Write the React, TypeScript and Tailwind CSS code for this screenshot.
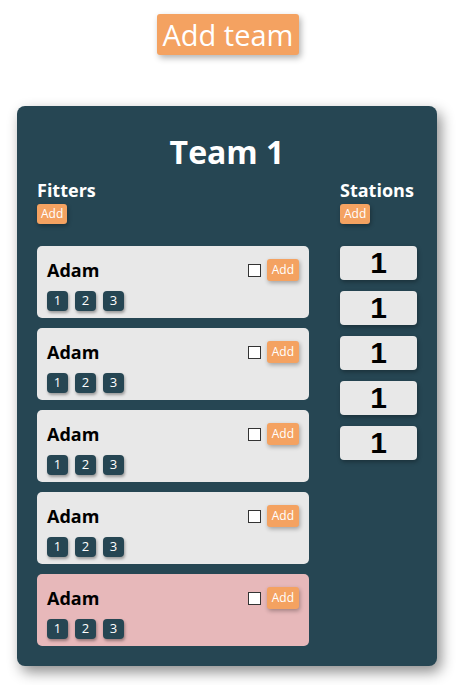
import React from "react";

const font = { fontFamily: '"Open Sans", "Noto Sans", sans-serif' };

function FitterCard({ pink }: { pink?: boolean }) {
  return (
    <div
      className={`w-[272px] h-[72px] rounded-[5px] px-[10px] pt-[11px] ${
        pink ? "bg-[#e7b8ba]" : "bg-[#e8e8e8]"
      }`}
    >
      <div className="flex items-center justify-between h-[26px]">
        <span className="text-[18px] font-bold text-black leading-none">Adam</span>
        <div className="flex items-center gap-[6px]">
          <span className="w-[13px] h-[13px] border border-[#333] bg-white" />
          <button className="h-[22px] px-[5px] bg-[#f4a261] text-white text-[12px] rounded-[3px] shadow-[1px_2px_4px_rgba(0,0,0,0.3)] leading-none">
            Add
          </button>
        </div>
      </div>
      <div className="flex gap-[7px] mt-[8px]">
        {["1", "2", "3"].map((n) => (
          <span
            key={n}
            className="w-[21px] h-[20px] rounded-[4px] bg-[#264653] text-white text-[13px] flex items-center justify-center shadow-[1px_2px_3px_rgba(0,0,0,0.35)]"
          >
            {n}
          </span>
        ))}
      </div>
    </div>
  );
}

function Station() {
  return (
    <div className="w-[77px] h-[34px] rounded-[4px] bg-[#e8e8e8] flex items-center justify-center shadow-[1px_2px_4px_rgba(0,0,0,0.3)]">
      <span
        className="text-[30px] font-bold text-black leading-none"
        style={{ fontFamily: '"Liberation Sans", Arial, sans-serif' }}
      >
        1
      </span>
    </div>
  );
}

export default function App() {
  return (
    <div className="w-[456px] min-h-[685px] bg-white flex flex-col items-center pt-[14px]" style={font}>
      <button className="h-[41px] px-[6px] bg-[#f4a261] text-white text-[29px] leading-none rounded-[3px] shadow-[2px_3px_6px_rgba(0,0,0,0.3)]">
        Add team
      </button>
      <div className="mt-[51px] w-[420px] -translate-x-[1px] bg-[#264653] rounded-[8px] px-[20px] pt-[30px] pb-[20px] shadow-[4px_6px_14px_rgba(0,0,0,0.45)]">
        <h1 className="text-center text-white text-[32px] font-bold leading-none">Team 1</h1>
        <div className="flex justify-between mt-[11px]">
          <div className="flex flex-col">
            <div className="text-white text-[18px] font-bold leading-[22px]">Fitters</div>
            <button className="self-start mt-[3px] h-[20px] px-[4px] bg-[#f4a261] text-white text-[12px] leading-none rounded-[3px] shadow-[1px_2px_4px_rgba(0,0,0,0.3)]">
              Add
            </button>
            <div className="flex flex-col gap-[10px] mt-[22px]">
              <FitterCard />
              <FitterCard />
              <FitterCard />
              <FitterCard />
              <FitterCard pink />
            </div>
          </div>
          <div className="flex flex-col">
            <div className="text-white text-[18px] font-bold leading-[22px]">Stations</div>
            <button className="self-start mt-[3px] h-[20px] px-[4px] bg-[#f4a261] text-white text-[12px] leading-none rounded-[3px] shadow-[1px_2px_4px_rgba(0,0,0,0.3)]">
              Add
            </button>
            <div className="flex flex-col gap-[11px] mt-[22px]">
              <Station />
              <Station />
              <Station />
              <Station />
              <Station />
            </div>
          </div>
        </div>
      </div>
    </div>
  );
}
